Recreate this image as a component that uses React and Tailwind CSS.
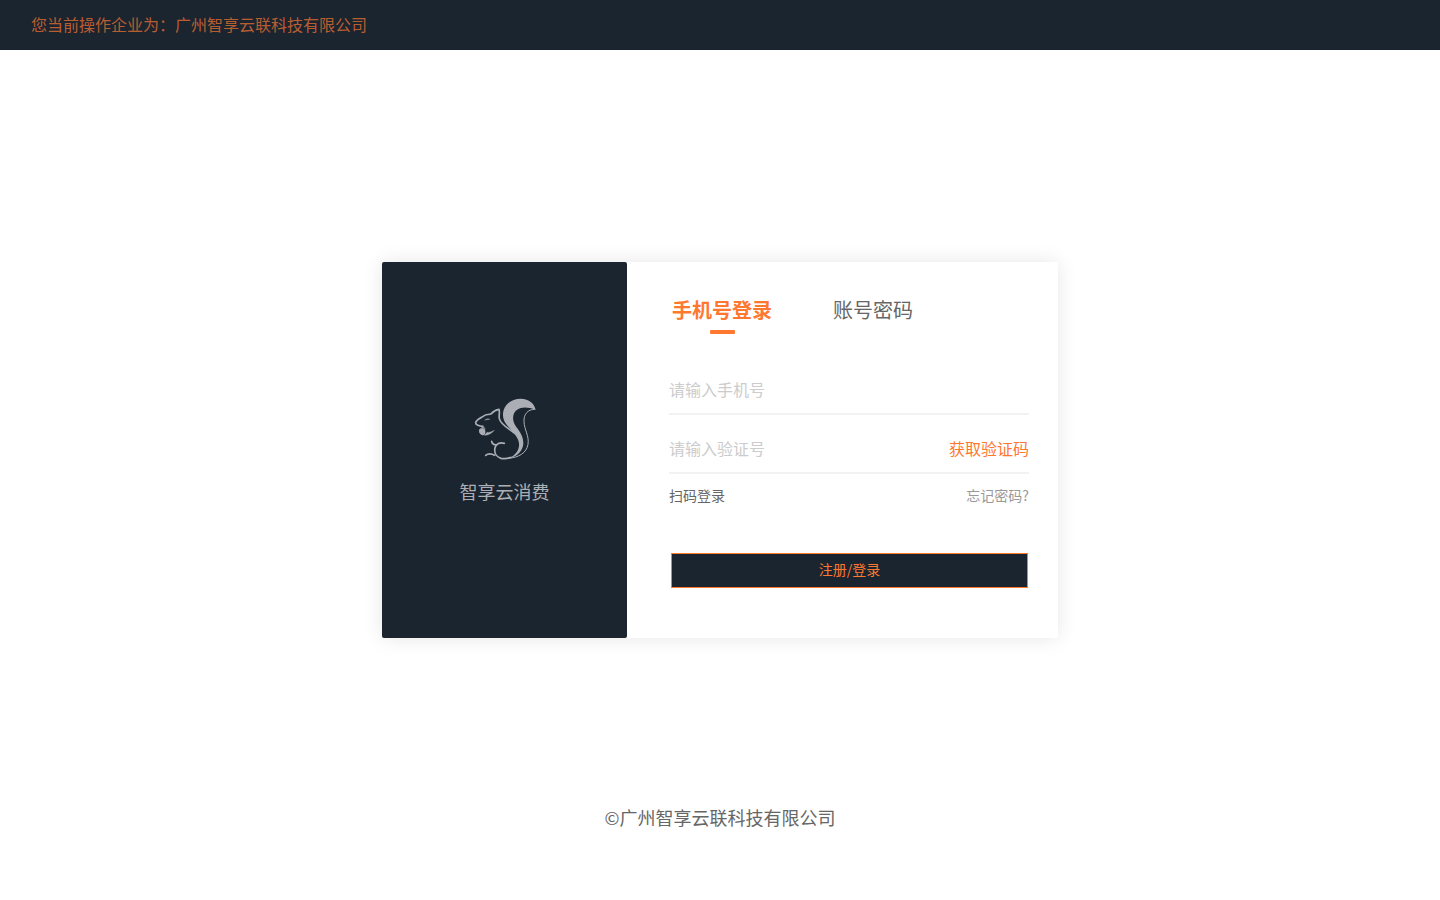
import React, { useState } from 'react';

const COMPANY = '广州智享云联科技有限公司';

const TABS = [
  { key: 'phone', label: '手机号登录' },
  { key: 'account', label: '账号密码' },
];

export default function App() {
  const [activeTab, setActiveTab] = useState('phone');

  return (
    <div className="min-h-screen grid grid-rows-[1fr_auto_1fr] bg-white font-['Noto_Sans_CJK_SC',sans-serif]">
      <div>
        <header className="h-[50px] px-[31px] pb-0.5 flex items-center bg-[#1b2530]">
          <p className="text-base text-[#ff7830]/70">您当前操作企业为：{COMPANY}</p>
        </header>
      </div>

      <main className="w-full max-w-[676px] mx-auto flex rounded-xs bg-white shadow-[0_0_20px_rgba(0,0,0,0.1)]">
        <BrandPanel />
        <LoginForm activeTab={activeTab} onTabChange={setActiveTab} />
      </main>

      <footer className="self-end pb-[69px] text-center text-lg leading-7 text-[#666666]">
        ©{COMPANY}
      </footer>
    </div>
  );
}

// 左侧品牌区
function BrandPanel() {
  return (
    <section className="w-[245px] shrink-0 pb-1.5 flex flex-col items-center justify-center rounded-xs bg-[#1b2530]">
      <SquirrelLogo />
      <p className="mt-2 text-lg leading-[26px] text-[#abafb5]">智享云消费</p>
    </section>
  );
}

// 右侧登录表单
function LoginForm({ activeTab, onTabChange }) {
  return (
    <form className="flex-1 pt-[34px] pb-[50px] pl-[42px] pr-[29px]" onSubmit={(e) => e.preventDefault()}>
      <div className="flex gap-[61px] pl-[3px]">
        {TABS.map((tab) => {
          const active = tab.key === activeTab;
          return (
            <button
              key={tab.key}
              type="button"
              onClick={() => onTabChange(tab.key)}
              className={`flex flex-col items-center gap-1.5 text-xl leading-7 cursor-pointer ${active ? 'font-bold text-[#ff7830]' : 'text-[#666666]'}`}
            >
              {tab.label}
              {active && <span className="w-[25px] h-1 rounded-[1px] bg-[#ff7830]" />}
            </button>
          );
        })}
      </div>

      <div className="mt-[33px] border-b-2 border-[#f2f2f2]">
        <input
          type="tel"
          aria-label="手机号"
          placeholder="请输入手机号"
          className="block w-full h-[46px] pb-0.5 text-base text-[#666666] placeholder:text-[#cccccc] outline-none"
        />
      </div>

      <div className="mt-[11px] flex items-center border-b-2 border-[#f2f2f2]">
        <input
          type="text"
          aria-label="验证号"
          placeholder="请输入验证号"
          className="flex-1 min-w-0 h-[46px] pb-0.5 text-base text-[#666666] placeholder:text-[#cccccc] outline-none"
        />
        <button type="button" className="pb-0.5 text-base text-[#ff7830] cursor-pointer">获取验证码</button>
      </div>

      <div className="mt-3 flex justify-between text-sm leading-[18px]">
        <a href="#scan" className="text-[#666666]">扫码登录</a>
        <a href="#forgot" className="text-[#999999]">忘记密码?</a>
      </div>

      <div className="mt-[49px] pl-[2px] pr-px">
        <button
          type="submit"
          className="block w-full h-[35px] pb-1 border border-[#ff7830] bg-[#1b2530] text-sm text-[#ff7830] cursor-pointer"
        >
          注册/登录
        </button>
      </div>
    </form>
  );
}

function SquirrelLogo() {
  return (
    <svg viewBox="0 0 240 240" className="w-20 h-20" fill="none" stroke="#abafb5" strokeLinecap="round" strokeLinejoin="round" aria-hidden="true">
      {/* 尾巴 */}
      <path
        d="M212 60C209 42 193 26 167 26C137 26 113 47 114 76C115 101 134 113 147 130C160 146 166 160 160 177C154 192 141 203 124 206C150 204 169 189 174 168C178 148 169 132 159 118C148 103 142 92 145 77C150 54 177 45 212 60Z"
        fill="#abafb5"
        stroke="none"
      />
      <path d="M208 58C188 58 176 73 177 95C178 119 193 138 189 163C185 188 162 203 130 205" strokeWidth="3" />
      {/* 头和背 */}
      <path
        d="M54 109C43 109 31 105 32 97C36 88 48 84 58 77C64 72 72 75 79 71C85 64 92 59 102 58C105 67 101 77 103 86C107 104 128 113 149 130"
        strokeWidth="5"
      />
      <path d="M60 90C65 85 70 85 75 88C70 89 65 89 60 90Z" fill="#abafb5" strokeWidth="1" />
      {/* 松果和前爪 */}
      <path d="M43 118C47 114 57 114 60 119C63 127 60 135 53 136C45 135 40 127 43 118Z" fill="#abafb5" stroke="none" />
      <path d="M48 115C51 112 55 111 60 115" strokeWidth="3" />
      <path d="M58 135C68 138 79 131 88 121C80 125 74 128 66 127C64 130 61 133 58 135Z" fill="#abafb5" strokeWidth="1" />
      {/* 腿和肚子 */}
      <path d="M118 160C105 156 93 161 90 173C87 188 94 201 108 205C118 207 128 206 138 202" strokeWidth="5" />
      <path d="M80 154C81 163 86 164 94 165" strokeWidth="5" />
      <path d="M62 196C69 190 80 191 89 196" strokeWidth="5" />
    </svg>
  );
}
